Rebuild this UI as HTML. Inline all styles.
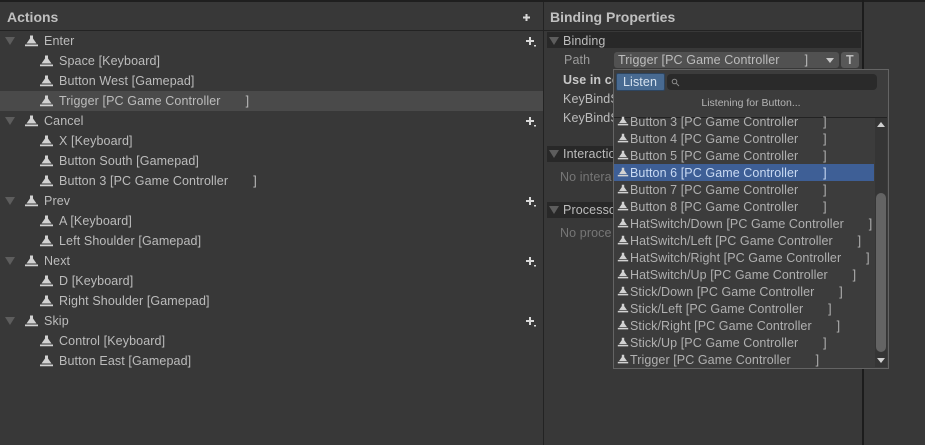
<!DOCTYPE html>
<html><head><meta charset="utf-8">
<style>
html,body{margin:0;padding:0;width:925px;height:445px;overflow:hidden;background:#383838}
body{position:relative;font-family:"Liberation Sans",sans-serif;font-size:12.5px;color:#bcbcbc;letter-spacing:.11px}
.a{position:absolute}
.t{position:absolute;white-space:pre;line-height:16px;height:16px}
.i{position:absolute;width:15px;height:13px}
.p{position:absolute;width:13px;height:13px}
.tri{position:absolute;width:0;height:0;border-left:5px solid transparent;border-right:5px solid transparent;border-top:8px solid #5d5d5d}
.l{position:absolute;left:630px;white-space:pre;line-height:16px;height:16px;color:#b0b0b0;letter-spacing:.08px}
.li{position:absolute;left:617px;width:12px;height:11px}
.d{color:#767676}
</style></head><body>
<svg width="0" height="0" style="position:absolute"><defs>
<symbol id="ic" viewBox="0 0 15 13"><path d="M6 0.5h3v3l3.5 5h-10L6 3.500zM1 9.500h13v1.800H1z" fill="#d2d2d2"/></symbol>
<symbol id="pl" viewBox="0 0 13 13"><path d="M5 2h2v3h3v2H7v3H5V7H2V5h3zM10 10h2v1.500h-2z" fill="#d8d8d8"/></symbol>
<symbol id="pt" viewBox="0 0 13 13"><path d="M5.500 3h2v2.500H10v2H7.500V10h-2V7.500H3v-2h2.500z" fill="#d8d8d8"/></symbol>
</defs></svg>

<div class="a" style="left:0;top:0;width:925px;height:2px;background:#1f1f1f"></div>
<div class="a" style="left:0;top:30px;width:862px;height:1px;background:#232323"></div>
<div class="a" style="left:543px;top:2px;width:1px;height:443px;background:#232323"></div>
<div class="a" style="left:862px;top:0;width:2px;height:445px;background:#1c1c1c"></div>
<div class="a" style="left:0;top:91px;width:543px;height:20px;background:#4a4a4a"></div>

<div class="t" style="left:7px;top:9px;font-size:14px;font-weight:bold;color:#c0c0c0;letter-spacing:0">Actions</div>
<svg class="p" style="left:520px;top:11px"><use href="#pt"/></svg>

<div class="tri" style="left:5px;top:37px"></div><svg class="i" style="left:24px;top:35px"><use href="#ic"/></svg><div class="t" style="left:44px;top:33px">Enter</div><svg class="p" style="left:524px;top:35px"><use href="#pl"/></svg>
<svg class="i" style="left:39px;top:55px"><use href="#ic"/></svg><div class="t" style="left:59px;top:53px">Space [Keyboard]</div>
<svg class="i" style="left:39px;top:75px"><use href="#ic"/></svg><div class="t" style="left:59px;top:73px">Button West [Gamepad]</div>
<svg class="i" style="left:39px;top:95px"><use href="#ic"/></svg><div class="t" style="left:59px;top:93px">Trigger [PC Game Controller       ]</div>

<div class="tri" style="left:5px;top:117px"></div><svg class="i" style="left:24px;top:115px"><use href="#ic"/></svg><div class="t" style="left:44px;top:113px">Cancel</div><svg class="p" style="left:524px;top:115px"><use href="#pl"/></svg>
<svg class="i" style="left:39px;top:135px"><use href="#ic"/></svg><div class="t" style="left:59px;top:133px">X [Keyboard]</div>
<svg class="i" style="left:39px;top:155px"><use href="#ic"/></svg><div class="t" style="left:59px;top:153px">Button South [Gamepad]</div>
<svg class="i" style="left:39px;top:175px"><use href="#ic"/></svg><div class="t" style="left:59px;top:173px">Button 3 [PC Game Controller       ]</div>

<div class="tri" style="left:5px;top:197px"></div><svg class="i" style="left:24px;top:195px"><use href="#ic"/></svg><div class="t" style="left:44px;top:193px">Prev</div><svg class="p" style="left:524px;top:195px"><use href="#pl"/></svg>
<svg class="i" style="left:39px;top:215px"><use href="#ic"/></svg><div class="t" style="left:59px;top:213px">A [Keyboard]</div>
<svg class="i" style="left:39px;top:235px"><use href="#ic"/></svg><div class="t" style="left:59px;top:233px">Left Shoulder [Gamepad]</div>

<div class="tri" style="left:5px;top:257px"></div><svg class="i" style="left:24px;top:255px"><use href="#ic"/></svg><div class="t" style="left:44px;top:253px">Next</div><svg class="p" style="left:524px;top:255px"><use href="#pl"/></svg>
<svg class="i" style="left:39px;top:275px"><use href="#ic"/></svg><div class="t" style="left:59px;top:273px">D [Keyboard]</div>
<svg class="i" style="left:39px;top:295px"><use href="#ic"/></svg><div class="t" style="left:59px;top:293px">Right Shoulder [Gamepad]</div>

<div class="tri" style="left:5px;top:317px"></div><svg class="i" style="left:24px;top:315px"><use href="#ic"/></svg><div class="t" style="left:44px;top:313px">Skip</div><svg class="p" style="left:524px;top:315px"><use href="#pl"/></svg>
<svg class="i" style="left:39px;top:335px"><use href="#ic"/></svg><div class="t" style="left:59px;top:333px">Control [Keyboard]</div>
<svg class="i" style="left:39px;top:355px"><use href="#ic"/></svg><div class="t" style="left:59px;top:353px">Button East [Gamepad]</div>

<div class="t" style="left:550px;top:9px;font-size:14px;font-weight:bold;color:#c0c0c0;letter-spacing:0">Binding Properties</div>

<div class="a" style="left:547px;top:32px;width:314px;height:16px;background:#282828"></div>
<div class="tri" style="left:549px;top:37px"></div>
<div class="t" style="left:563px;top:33px">Binding</div>
<div class="t" style="left:564px;top:52px;color:#9c9c9c">Path</div>
<div class="a" style="left:614px;top:52px;width:225px;height:16px;background:#515151;border-radius:3px"></div>
<div class="t" style="left:618px;top:52px">Trigger [PC Game Controller       ]</div>
<div class="a" style="left:826px;top:58px;width:0;height:0;border-left:4px solid transparent;border-right:4px solid transparent;border-top:5px solid #c8c8c8"></div>
<div class="a" style="left:841px;top:52px;width:18px;height:16px;background:#585858;border-radius:3px"></div>
<div class="t" style="left:846px;top:52px;font-weight:bold">T</div>
<div class="t" style="left:563px;top:72px;font-weight:bold;color:#c8c8c8">Use in co</div>
<div class="t" style="left:563px;top:91px">KeyBindS</div>
<div class="t" style="left:563px;top:110px">KeyBindS</div>

<div class="a" style="left:547px;top:146px;width:66px;height:16px;background:#282828"></div>
<div class="tri" style="left:549px;top:150px"></div>
<div class="t" style="left:563px;top:146px">Interactio</div>
<div class="t d" style="left:560px;top:169px">No intera</div>
<div class="a" style="left:547px;top:202px;width:66px;height:16px;background:#282828"></div>
<div class="tri" style="left:549px;top:206px"></div>
<div class="t" style="left:563px;top:202px">Processo</div>
<div class="t d" style="left:560px;top:225px">No proce</div>

<!-- popup -->
<div class="a" style="left:613px;top:69px;width:274px;height:298px;background:#3c3c3c;border:1px solid #646464"></div>
<div class="a" style="left:616px;top:73px;width:47px;height:16px;background:#486a91;border:1px solid #2d4560;border-radius:2px"></div>
<div class="t" style="left:623px;top:74px;color:#d6e2ef;font-size:12.5px">Listen</div>
<div class="a" style="left:667px;top:74px;width:210px;height:16px;background:#2a2a2a;border-radius:4px"></div>
<svg class="a" style="left:671px;top:78px" width="9" height="9"><circle cx="3.5" cy="3.5" r="2.3" fill="none" stroke="#8a8a8a"/><path d="M5.300 5.300L8 8" stroke="#8a8a8a"/></svg>
<div class="t" style="left:700px;top:95px;font-size:10.5px;color:#b4b4b4;width:102px;text-align:center;letter-spacing:0">Listening for Button...</div>
<div class="a" style="left:614px;top:117px;width:273px;height:1px;background:#232323"></div>
<div class="a" style="left:875px;top:118px;width:12px;height:249px;background:#353535"></div>
<div class="a" style="left:876px;top:193px;width:10px;height:159px;background:#646464;border-radius:5px"></div>
<div class="a" style="left:877px;top:122px;width:0;height:0;border-left:4px solid transparent;border-right:4px solid transparent;border-bottom:5px solid #d0d0d0"></div>
<div class="a" style="left:877px;top:358px;width:0;height:0;border-left:4px solid transparent;border-right:4px solid transparent;border-top:5px solid #d0d0d0"></div>
<div class="a" style="left:614px;top:164px;width:260px;height:17px;background:#3e5f96"></div>

<svg class="li" style="top:116px"><use href="#ic"/></svg><div class="l" style="top:114px">Button 3 [PC Game Controller       ]</div>
<svg class="li" style="top:133px"><use href="#ic"/></svg><div class="l" style="top:131px">Button 4 [PC Game Controller       ]</div>
<svg class="li" style="top:150px"><use href="#ic"/></svg><div class="l" style="top:148px">Button 5 [PC Game Controller       ]</div>
<svg class="li" style="top:167px"><use href="#ic"/></svg><div class="l" style="top:165px;color:#c9daf3">Button 6 [PC Game Controller       ]</div>
<svg class="li" style="top:184px"><use href="#ic"/></svg><div class="l" style="top:182px">Button 7 [PC Game Controller       ]</div>
<svg class="li" style="top:201px"><use href="#ic"/></svg><div class="l" style="top:199px">Button 8 [PC Game Controller       ]</div>
<svg class="li" style="top:218px"><use href="#ic"/></svg><div class="l" style="top:216px">HatSwitch/Down [PC Game Controller       ]</div>
<svg class="li" style="top:235px"><use href="#ic"/></svg><div class="l" style="top:233px">HatSwitch/Left [PC Game Controller       ]</div>
<svg class="li" style="top:252px"><use href="#ic"/></svg><div class="l" style="top:250px">HatSwitch/Right [PC Game Controller       ]</div>
<svg class="li" style="top:269px"><use href="#ic"/></svg><div class="l" style="top:267px">HatSwitch/Up [PC Game Controller       ]</div>
<svg class="li" style="top:286px"><use href="#ic"/></svg><div class="l" style="top:284px">Stick/Down [PC Game Controller       ]</div>
<svg class="li" style="top:303px"><use href="#ic"/></svg><div class="l" style="top:301px">Stick/Left [PC Game Controller       ]</div>
<svg class="li" style="top:320px"><use href="#ic"/></svg><div class="l" style="top:318px">Stick/Right [PC Game Controller       ]</div>
<svg class="li" style="top:337px"><use href="#ic"/></svg><div class="l" style="top:335px">Stick/Up [PC Game Controller       ]</div>
<svg class="li" style="top:354px"><use href="#ic"/></svg><div class="l" style="top:352px">Trigger [PC Game Controller       ]</div>
</body></html>
